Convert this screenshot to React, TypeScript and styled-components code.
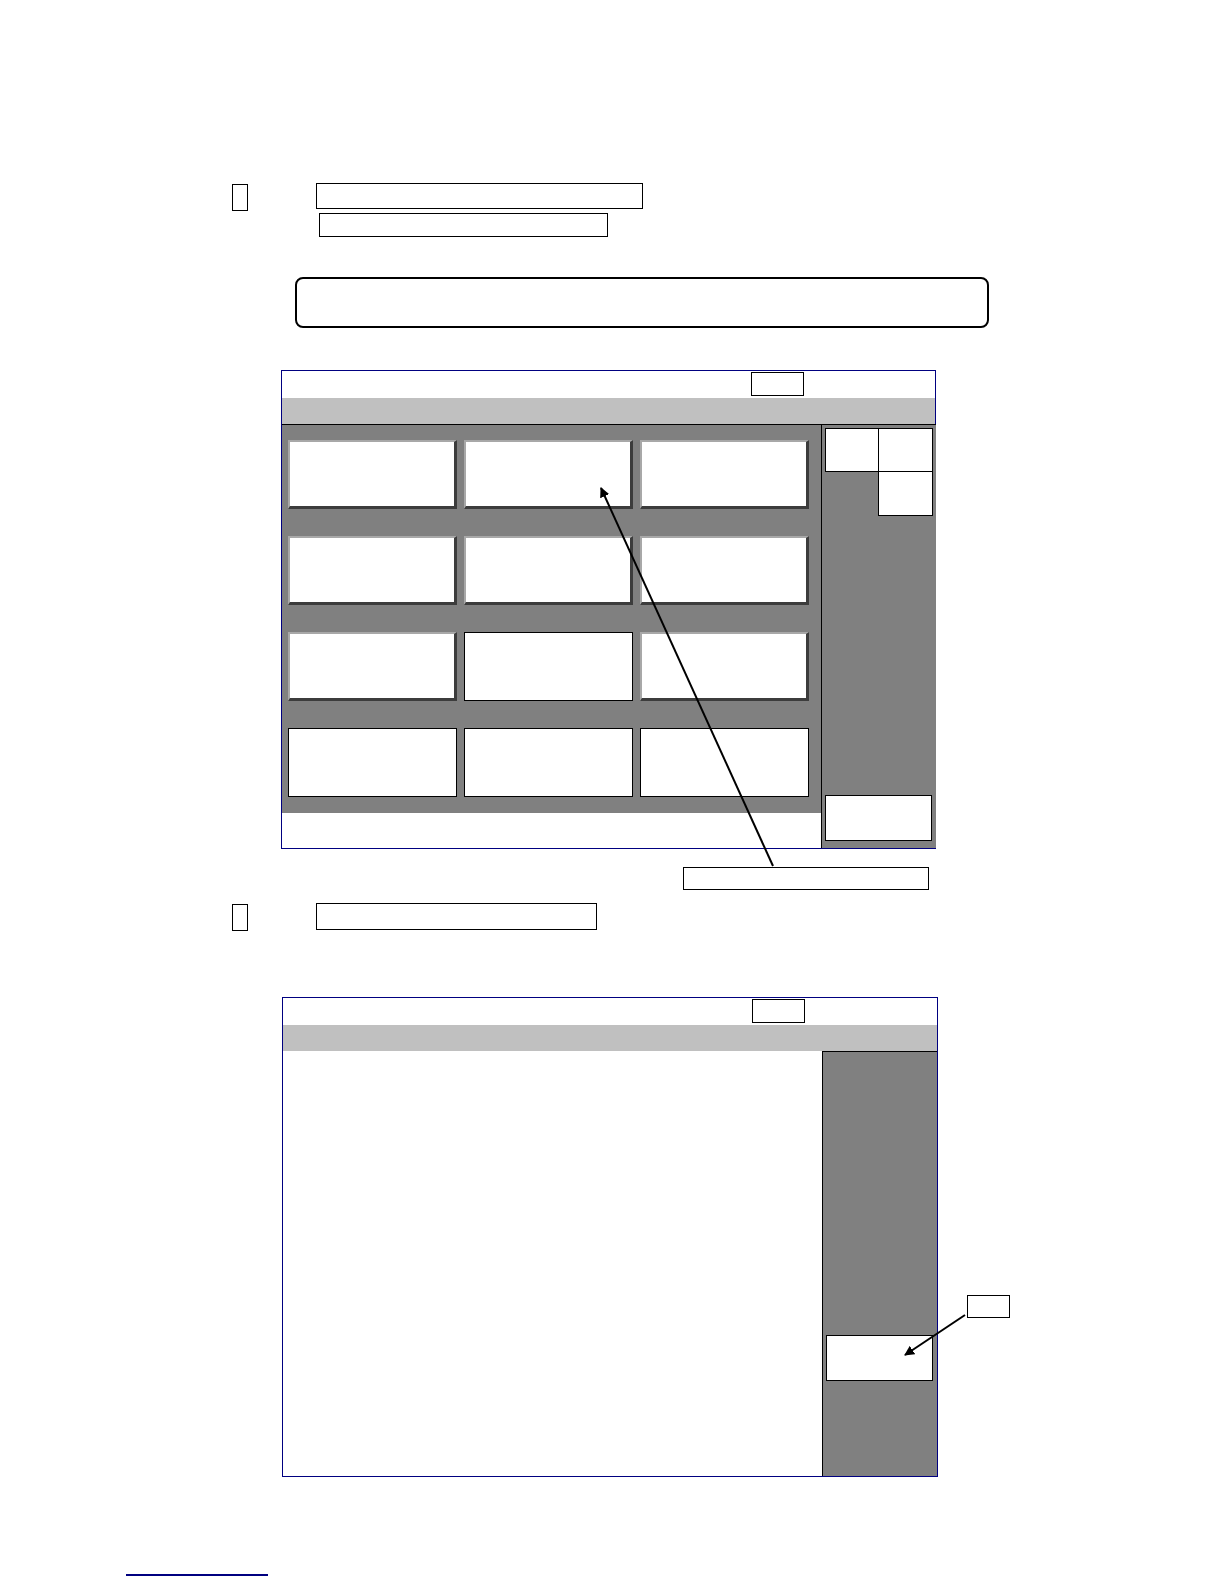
import React from 'react';
import styled, { createGlobalStyle } from 'styled-components';

const GlobalStyle = createGlobalStyle`
    * { box-sizing: border-box; }
    body {
        margin: 0;
        background: #fff;
        font-family: "Liberation Sans", Arial, sans-serif;
    }
`;

const NAVY = '#000080';
const DARK = '#808080';
const LIGHT = '#c0c0c0';

const Page = styled.div`
    position: relative;
    width: 1224px;
    height: 1584px;
    overflow: hidden;
    padding-top: 183px;
    display: flex;
    flex-direction: column;
    align-items: flex-start;
`;

const HeadingRow = styled.div<{ $top?: number }>`
    display: flex;
    align-items: flex-start;
    height: 28px;
    margin-top: ${({ $top }) => $top ?? 0}px;
`;

const Marker = styled.div`
    width: 16px;
    height: 27px;
    margin-left: 232px;
    margin-top: 1px;
    border: 1px solid #000;
`;

const LabelBox = styled.div<{ $left: number; $width: number; $height?: number; $top?: number }>`
    margin-left: ${({ $left }) => $left}px;
    margin-top: ${({ $top }) => $top ?? 0}px;
    width: ${({ $width }) => $width}px;
    height: ${({ $height }) => $height ?? 26}px;
    border: 1px solid #000;
    background: #fff;
    flex-shrink: 0;
`;

const NoteBox = styled.div`
    margin-left: 295px;
    margin-top: 40px;
    width: 694px;
    height: 51px;
    border: 2px solid #000;
    border-radius: 8px;
`;

const Screen = styled.div<{ $left: number; $top: number; $width: number; $height: number }>`
    margin-left: ${({ $left }) => $left}px;
    margin-top: ${({ $top }) => $top}px;
    width: ${({ $width }) => $width}px;
    height: ${({ $height }) => $height}px;
    border: 1px solid ${NAVY};
    display: flex;
    flex-direction: column;
    background: #fff;
    flex-shrink: 0;
`;

const TitleBar = styled.div`
    height: 27px;
    display: flex;
    align-items: flex-start;
    padding-top: 1px;
`;

const TitleTag = styled.div`
    margin-left: 469px;
    width: 53px;
    height: 24px;
    border: 1px solid #000;
`;

const Band = styled.div`
    height: 26px;
    background: ${LIGHT};
`;

const ScreenBody = styled.div`
    flex: 1;
    display: flex;
`;

const MainArea = styled.div`
    flex: 1;
    display: flex;
    flex-direction: column;
    background: #fff;
`;

const KeyGrid = styled.div`
    height: 389px;
    background: ${DARK};
    border-top: 1px solid #000;
    padding: 15px 12px 0 6px;
    display: grid;
    grid-template-columns: repeat(3, 169px);
    grid-template-rows: repeat(4, 69px);
    column-gap: 7px;
    row-gap: 27px;
`;

const Key = styled.div<{ $flat?: boolean }>`
    background: #fff;
    border-style: solid;
    border-width: ${({ $flat }) => ($flat ? '1px' : '2px 3px 3px 2px')};
    border-color: ${({ $flat }) => ($flat ? '#000' : '#a8a8a8 #3c3c3c #3c3c3c #a8a8a8')};
`;

const SidePanel = styled.div`
    width: 115px;
    background: ${DARK};
    border-left: 1px solid #000;
    border-top: 1px solid #000;
    display: flex;
    flex-direction: column;
    padding: 3px 3px 7px 3px;
`;

const SideKeys = styled.div`
    display: grid;
    grid-template-columns: 54px 54px;
    grid-template-rows: 44px 44px;
`;

const SideKey = styled.div<{ $col: number; $row: number }>`
    grid-column: ${({ $col }) => $col};
    grid-row: ${({ $row }) => $row};
    background: #fff;
    border: 1px solid #000;
    margin-left: ${({ $col }) => ($col > 1 ? -1 : 0)}px;
    margin-top: ${({ $row }) => ($row > 1 ? -1 : 0)}px;
`;

const SideButton = styled.div<{ $top?: number }>`
    margin-top: ${({ $top }) => ($top === undefined ? 'auto' : `${$top}px`)};
    height: 46px;
    width: 107px;
    background: #fff;
    border: 1px solid #000;
`;

const ScreenRow = styled.div`
    display: flex;
    align-items: flex-start;
`;

const FooterRule = styled.div`
    margin-left: 126px;
    margin-top: 97px;
    width: 142px;
    height: 2px;
    background: ${NAVY};
`;

const Arrows = styled.svg`
    position: absolute;
    left: 0;
    top: 0;
    pointer-events: none;
`;

const keyRows: boolean[][] = [
    [false, false, false],
    [false, false, false],
    [false, true, false],
    [true, true, true],
];

export default function App() {
    return (
        <>
            <GlobalStyle />
            <Page>
                <HeadingRow>
                    <Marker />
                    <LabelBox $left={68} $width={327} />
                </HeadingRow>
                <LabelBox $left={319} $width={289} $height={24} $top={2} />

                <NoteBox />

                <Screen $left={281} $top={42} $width={655} $height={479}>
                    <TitleBar>
                        <TitleTag />
                    </TitleBar>
                    <Band />
                    <ScreenBody>
                        <MainArea>
                            <KeyGrid>
                                {keyRows.flatMap((row, r) =>
                                    row.map((flat, c) => <Key key={`${r}-${c}`} $flat={flat} />)
                                )}
                            </KeyGrid>
                        </MainArea>
                        <SidePanel>
                            <SideKeys>
                                <SideKey $col={1} $row={1} />
                                <SideKey $col={2} $row={1} />
                                <SideKey $col={2} $row={2} />
                            </SideKeys>
                            <SideButton />
                        </SidePanel>
                    </ScreenBody>
                </Screen>

                <LabelBox $left={683} $width={246} $height={23} $top={18} />

                <HeadingRow $top={13}>
                    <Marker />
                    <LabelBox $left={68} $width={281} $height={27} />
                </HeadingRow>

                <ScreenRow>
                    <Screen $left={282} $top={66} $width={656} $height={480}>
                        <TitleBar>
                            <TitleTag />
                        </TitleBar>
                        <Band />
                        <ScreenBody>
                            <MainArea />
                            <SidePanel>
                                <SideButton $top={280} />
                            </SidePanel>
                        </ScreenBody>
                    </Screen>
                    <LabelBox $left={29} $width={43} $height={23} $top={364} />
                </ScreenRow>

                <FooterRule />

                <Arrows width={1224} height={1584} viewBox="0 0 1224 1584">
                    <defs>
                        <marker id="head" markerWidth="10" markerHeight="10" refX="9" refY="5" orient="auto" markerUnits="userSpaceOnUse">
                            <path d="M0,0 L10,5 L0,10 z" fill="#000" />
                        </marker>
                    </defs>
                    <line x1={773} y1={866} x2={601} y2={488} stroke="#000" strokeWidth={2} markerEnd="url(#head)" />
                    <line x1={965} y1={1315} x2={905} y2={1355} stroke="#000" strokeWidth={2} markerEnd="url(#head)" />
                </Arrows>
            </Page>
        </>
    );
}
